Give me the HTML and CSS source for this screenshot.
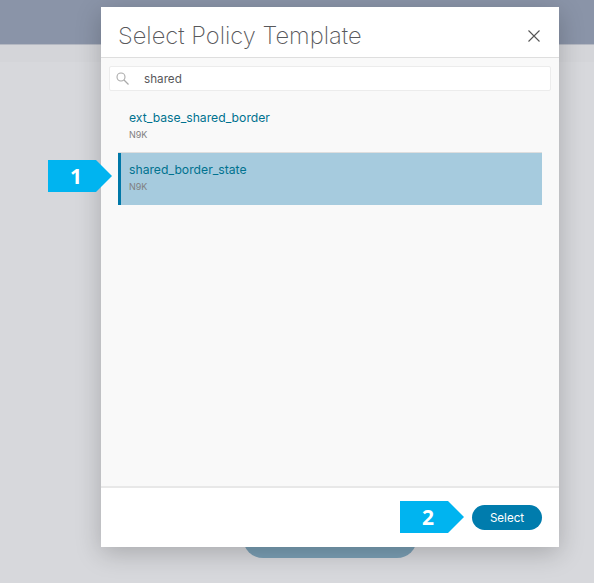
FILE: index.html
```html
<!DOCTYPE html>
<html lang="en">
<head>
  <meta charset="UTF-8">
  <title>Select Policy Template</title>
  <link rel="stylesheet" href="styles.css">
</head>
<body>
  <header class="top-bar"></header>
  <div class="sub-bar"></div>
  <main class="backdrop">
    <div class="back-button"></div>
  </main>

  <section class="modal">
    <div class="modal-head">
      <h1>Select Policy Template</h1>
      <svg class="close-icon" width="14" height="14" viewBox="0 0 14 14">
        <path d="M1.5 1.5 L12.5 12.5 M12.5 1.5 L1.5 12.5" stroke="#555" stroke-width="1.1" fill="none"/>
      </svg>
    </div>
    <div class="modal-body">
      <div class="search-box">
        <svg class="search-icon" width="13" height="13" viewBox="0 0 13 13">
          <circle cx="5" cy="5" r="4" stroke="#aaa" stroke-width="1.1" fill="none"/>
          <path d="M8 8 L12.5 12.5" stroke="#aaa" stroke-width="1.3"/>
        </svg>
        <span class="search-text">shared</span>
      </div>
      <ul class="template-list">
        <li class="template">
          <div class="template-name">ext_base_shared_border</div>
          <div class="template-type">N9K</div>
        </li>
        <li class="template selected">
          <div class="template-name">shared_border_state</div>
          <div class="template-type">N9K</div>
        </li>
      </ul>
    </div>
    <div class="modal-foot">
      <button class="select-button">Select</button>
    </div>
  </section>

  <div class="callout callout-one">1</div>
  <div class="callout callout-two">2</div>
</body>
</html>
```

FILE: styles.css
```css
/* General Styles */
html, body {
  height: 100%;
}

body {
  margin: 0;
  height: 583px;
  overflow: hidden;
  display: flex;
  flex-direction: column;
  font-family: Inter, Arial, sans-serif;
  background-color: #d7d8dc;
  color: #333;
}

.top-bar {
  height: 45px;
  flex: none;
  background-color: #8a94a8;
  border-bottom: 1px solid #b4b8c2;
  box-sizing: border-box;
}

.sub-bar {
  height: 17px;
  flex: none;
  background-color: #d4d5d9;
}

.backdrop {
  flex: 1;
  display: flex;
  flex-direction: column;
  justify-content: flex-end;
  align-items: flex-start;
  padding: 0 0 25px 243px;
}

.back-button {
  width: 174px;
  height: 40px;
  background-color: #7a9fb5;
  border-radius: 20px;
}

/* Modal */
.modal {
  position: absolute;
  left: 101px;
  top: 7px;
  width: 458px;
  height: 540px;
  display: flex;
  flex-direction: column;
  background-color: #fff;
  box-shadow: 0 6px 24px rgba(0, 0, 0, 0.22);
}

.modal-head {
  height: 51px;
  flex: none;
  box-sizing: border-box;
  display: flex;
  align-items: center;
  justify-content: space-between;
  padding: 7px 18px 0 17px;
  border-bottom: 1px solid #dedede;
}

.modal-head h1 {
  margin: 0;
  font-size: 23.7px;
  font-weight: 200;
  color: #58585b;
}

.modal-body {
  flex: 1;
  background-color: #f9f9f9;
  padding: 8px 17px 0 17px;
}

.search-box {
  margin-left: -9px;
  margin-right: -9px;
  height: 25px;
  box-sizing: border-box;
  display: flex;
  align-items: center;
  background-color: #fff;
  border: 1px solid #ececec;
  border-radius: 2px;
  padding-left: 6px;
}

.search-icon {
  margin-right: 15px;
}

.search-text {
  font-size: 11.7px;
  color: #58585b;
}

.template-list {
  list-style: none;
  margin: 10px 0 0 0;
  padding: 0;
}

.template {
  height: 52px;
  box-sizing: border-box;
  padding: 9px 0 0 11px;
  border-bottom: 1px solid #dedede;
}

.template.selected {
  background-color: #a6cbde;
  border-left: 3px solid #0078a8;
  border-bottom: none;
  padding-left: 8px;
}

.template-name {
  font-size: 12.2px;
  line-height: 16px;
  color: #00728f;
}

.template-type {
  font-size: 9px;
  line-height: 14px;
  margin-top: 2px;
  color: #808080;
}

.modal-foot {
  height: 61px;
  flex: none;
  box-sizing: border-box;
  display: flex;
  align-items: center;
  justify-content: flex-end;
  padding-right: 17px;
  border-top: 2px solid #e8e8e8;
}

.select-button {
  width: 70px;
  height: 25px;
  border: none;
  border-radius: 13px;
  background-color: #007cad;
  color: #fff;
  font-family: Inter, Arial, sans-serif;
  font-size: 11.6px;
}

/* Numbered arrows */
.callout {
  position: absolute;
  width: 64px;
  height: 32px;
  padding-right: 8px;
  box-sizing: border-box;
  display: flex;
  align-items: center;
  justify-content: center;
  background-color: #00b4f0;
  clip-path: polygon(0 0, 48px 0, 100% 50%, 48px 100%, 0 100%);
  color: #fff;
  font-family: "Open Sans", Arial, sans-serif;
  font-size: 21px;
  font-weight: 700;
}

.callout-one {
  left: 48px;
  top: 160px;
}

.callout-two {
  left: 400px;
  top: 501px;
}
```
